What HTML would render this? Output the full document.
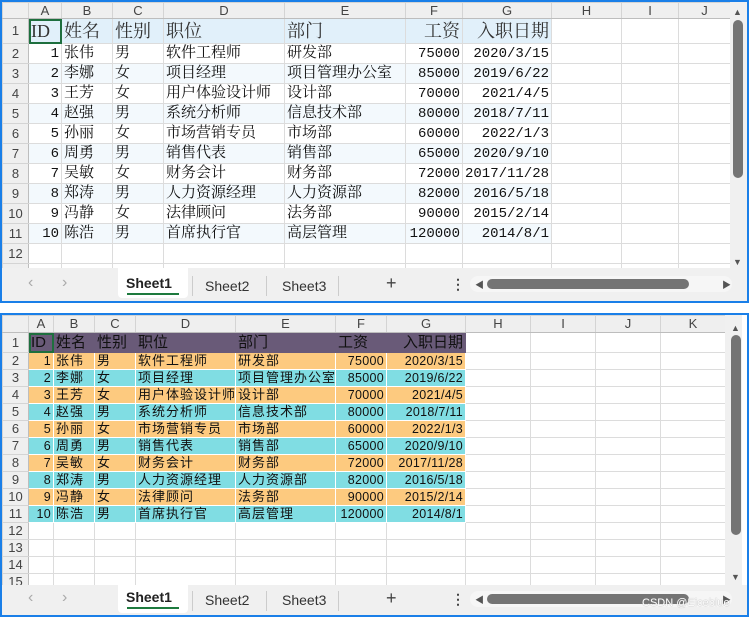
<!DOCTYPE html>
<html><head><meta charset="utf-8"><style>
*{margin:0;padding:0;box-sizing:border-box}
body{width:749px;height:617px;background:#fff;position:relative;overflow:hidden;font-family:"Liberation Sans","Noto Sans CJK SC",sans-serif}
.panel{position:absolute;left:0;width:749px;border:2px solid #1a7fe8;background:#fff;overflow:hidden}
table{border-collapse:collapse;table-layout:fixed;position:absolute;left:0;top:0}
td{border:1px solid #dcdcdc;white-space:nowrap;overflow:hidden;padding:0 2px;vertical-align:middle;line-height:14px}
.ch td{background:#efefef;text-align:center;color:#444;font-size:13px;border-color:#d4d4d4;border-bottom:1px solid #bdbdbd}
td.rh{background:#efefef;text-align:center;color:#444;font-size:13px;padding:0;border-color:#d4d4d4;border-right:1px solid #bdbdbd}
td.corner{background:#efefef}
.t1 td.c{font-family:"Liberation Mono","Noto Serif CJK SC",serif;font-size:15px;color:#111;line-height:16px}
.t1 td.c.n{font-size:14px}
.t1 .r1 td.c{font-size:18px;background:#e1f0fa;color:#333;font-family:"Liberation Serif","Noto Serif CJK SC",serif;line-height:20px}
.t1 .alt td.c{background:#f3f9fd}
.t1 td.e{background:#fff}
.n{text-align:right}
.t2 td.c{font-family:"Liberation Sans","Noto Sans CJK SC",sans-serif;font-size:13px;letter-spacing:1px;color:#111;border:1px solid #fff;line-height:14px}
.t2 .r1 td.c{background:#695a78;font-size:15px;letter-spacing:0;color:#111;border-color:#695a78;line-height:17px}
.t2 .o td.c{background:#fdca7f}
.t2 .b td.c{background:#80dde3}
.t2 td.n{letter-spacing:0.3px;font-size:12.5px}
.sel{outline:2px solid #1e6f3e;outline-offset:-2px}
.tabs{position:absolute;left:0;right:0;background:#f0f0f0}
.tab{position:absolute;font-size:14px;color:#333;top:8px}
.vs{position:absolute;background:#f0f0f0;width:17px}
.thumb{position:absolute;background:#747474;border-radius:5px}
</style></head><body>

<!-- TOP PANEL -->
<div class="panel" style="top:0;height:303px">
<table class="t1" style="width:728px">
<colgroup><col style="width:26px"><col style="width:33px"><col style="width:51px"><col style="width:51px"><col style="width:121px"><col style="width:121px"><col style="width:57px"><col style="width:89px"><col style="width:70px"><col style="width:57px"><col style="width:52px"></colgroup>
<tr class="ch" style="height:16px"><td class="corner"></td><td>A</td><td>B</td><td>C</td><td>D</td><td>E</td><td>F</td><td>G</td><td>H</td><td>I</td><td>J</td></tr>
<tr class="r1" style="height:25px"><td class="rh">1</td><td class="c sel">ID</td><td class="c">姓名</td><td class="c">性别</td><td class="c">职位</td><td class="c">部门</td><td class="c n">工资</td><td class="c n">入职日期</td><td class="e"></td><td class="e"></td><td class="e"></td></tr>
<tr style="height:20px"><td class="rh">2</td><td class="c n">1</td><td class="c">张伟</td><td class="c">男</td><td class="c">软件工程师</td><td class="c">研发部</td><td class="c n">75000</td><td class="c n">2020/3/15</td><td class="e"></td><td class="e"></td><td class="e"></td></tr>
<tr class="alt" style="height:20px"><td class="rh">3</td><td class="c n">2</td><td class="c">李娜</td><td class="c">女</td><td class="c">项目经理</td><td class="c">项目管理办公室</td><td class="c n">85000</td><td class="c n">2019/6/22</td><td class="e"></td><td class="e"></td><td class="e"></td></tr>
<tr style="height:20px"><td class="rh">4</td><td class="c n">3</td><td class="c">王芳</td><td class="c">女</td><td class="c">用户体验设计师</td><td class="c">设计部</td><td class="c n">70000</td><td class="c n">2021/4/5</td><td class="e"></td><td class="e"></td><td class="e"></td></tr>
<tr class="alt" style="height:20px"><td class="rh">5</td><td class="c n">4</td><td class="c">赵强</td><td class="c">男</td><td class="c">系统分析师</td><td class="c">信息技术部</td><td class="c n">80000</td><td class="c n">2018/7/11</td><td class="e"></td><td class="e"></td><td class="e"></td></tr>
<tr style="height:20px"><td class="rh">6</td><td class="c n">5</td><td class="c">孙丽</td><td class="c">女</td><td class="c">市场营销专员</td><td class="c">市场部</td><td class="c n">60000</td><td class="c n">2022/1/3</td><td class="e"></td><td class="e"></td><td class="e"></td></tr>
<tr class="alt" style="height:20px"><td class="rh">7</td><td class="c n">6</td><td class="c">周勇</td><td class="c">男</td><td class="c">销售代表</td><td class="c">销售部</td><td class="c n">65000</td><td class="c n">2020/9/10</td><td class="e"></td><td class="e"></td><td class="e"></td></tr>
<tr style="height:20px"><td class="rh">8</td><td class="c n">7</td><td class="c">吴敏</td><td class="c">女</td><td class="c">财务会计</td><td class="c">财务部</td><td class="c n">72000</td><td class="c n">2017/11/28</td><td class="e"></td><td class="e"></td><td class="e"></td></tr>
<tr class="alt" style="height:20px"><td class="rh">9</td><td class="c n">8</td><td class="c">郑涛</td><td class="c">男</td><td class="c">人力资源经理</td><td class="c">人力资源部</td><td class="c n">82000</td><td class="c n">2016/5/18</td><td class="e"></td><td class="e"></td><td class="e"></td></tr>
<tr style="height:20px"><td class="rh">10</td><td class="c n">9</td><td class="c">冯静</td><td class="c">女</td><td class="c">法律顾问</td><td class="c">法务部</td><td class="c n">90000</td><td class="c n">2015/2/14</td><td class="e"></td><td class="e"></td><td class="e"></td></tr>
<tr class="alt" style="height:20px"><td class="rh">11</td><td class="c n">10</td><td class="c">陈浩</td><td class="c">男</td><td class="c">首席执行官</td><td class="c">高层管理</td><td class="c n">120000</td><td class="c n">2014/8/1</td><td class="e"></td><td class="e"></td><td class="e"></td></tr>
<tr style="height:20px"><td class="rh">12</td><td></td><td></td><td></td><td></td><td></td><td></td><td></td><td></td><td></td><td></td></tr>
<tr style="height:20px"><td class="rh">13</td><td></td><td></td><td></td><td></td><td></td><td></td><td></td><td></td><td></td><td></td></tr>
</table>
<div class="vs" style="left:728px;top:0;height:266px"></div>
<div style="position:absolute;left:731px;top:5px;font-size:9px;color:#555">▲</div>
<div class="thumb" style="left:731px;top:18px;width:10px;height:158px"></div>
<div style="position:absolute;left:731px;top:255px;font-size:9px;color:#555">▼</div>
<div class="tabs" style="top:266px;height:33px">
 <div style="position:absolute;left:26px;top:6px;color:#aaa;font-size:16px">‹</div>
 <div style="position:absolute;left:60px;top:6px;color:#aaa;font-size:16px">›</div>
 <div style="position:absolute;left:116px;top:0;width:70px;height:30px;background:#fff;border-radius:0 0 4px 4px"></div>
 <div class="tab" style="left:124px;top:7px;font-weight:bold;color:#222">Sheet1</div>
 <div style="position:absolute;left:125px;top:25px;width:52px;height:2px;background:#1d7a3e"></div>
 <div style="position:absolute;left:190px;top:8px;width:1px;height:20px;background:#ccc"></div>
 <div class="tab" style="left:203px;top:10px">Sheet2</div>
 <div style="position:absolute;left:264px;top:8px;width:1px;height:20px;background:#ccc"></div>
 <div class="tab" style="left:280px;top:10px">Sheet3</div>
 <div style="position:absolute;left:336px;top:8px;width:1px;height:20px;background:#ccc"></div>
 <div style="position:absolute;left:384px;top:5px;font-size:18px;color:#444">+</div>
 <div style="position:absolute;left:449px;top:8px;font-size:14px;color:#444;font-weight:bold">⋮</div>
 <div style="position:absolute;left:468px;top:8px;width:262px;height:16px;background:#f6f6f6;border-radius:8px"></div>
 <div style="position:absolute;left:473px;top:10px;font-size:9px;color:#555">◀</div>
 <div class="thumb" style="left:485px;top:11px;width:202px;height:10px"></div>
 <div style="position:absolute;left:720px;top:10px;font-size:9px;color:#555">▶</div>
</div>
</div>

<!-- BOTTOM PANEL -->
<div class="panel" style="top:313px;height:304px">
<table class="t2" style="width:723px">
<colgroup><col style="width:26px"><col style="width:25px"><col style="width:41px"><col style="width:41px"><col style="width:100px"><col style="width:100px"><col style="width:51px"><col style="width:79px"><col style="width:65px"><col style="width:65px"><col style="width:65px"><col style="width:65px"></colgroup>
<tr class="ch" style="height:17px"><td class="corner"></td><td>A</td><td>B</td><td>C</td><td>D</td><td>E</td><td>F</td><td>G</td><td>H</td><td>I</td><td>J</td><td>K</td></tr>
<tr class="r1" style="height:20px"><td class="rh">1</td><td class="c sel" style="outline-color:#1e6f3e">ID</td><td class="c">姓名</td><td class="c">性别</td><td class="c">职位</td><td class="c">部门</td><td class="c">工资</td><td class="c" style="text-align:right">入职日期</td><td></td><td></td><td></td><td></td></tr>
<tr class="o" style="height:17px"><td class="rh">2</td><td class="c n">1</td><td class="c">张伟</td><td class="c">男</td><td class="c">软件工程师</td><td class="c">研发部</td><td class="c n">75000</td><td class="c n">2020/3/15</td><td></td><td></td><td></td><td></td></tr>
<tr class="b" style="height:17px"><td class="rh">3</td><td class="c n">2</td><td class="c">李娜</td><td class="c">女</td><td class="c">项目经理</td><td class="c">项目管理办公室</td><td class="c n">85000</td><td class="c n">2019/6/22</td><td></td><td></td><td></td><td></td></tr>
<tr class="o" style="height:17px"><td class="rh">4</td><td class="c n">3</td><td class="c">王芳</td><td class="c">女</td><td class="c">用户体验设计师</td><td class="c">设计部</td><td class="c n">70000</td><td class="c n">2021/4/5</td><td></td><td></td><td></td><td></td></tr>
<tr class="b" style="height:17px"><td class="rh">5</td><td class="c n">4</td><td class="c">赵强</td><td class="c">男</td><td class="c">系统分析师</td><td class="c">信息技术部</td><td class="c n">80000</td><td class="c n">2018/7/11</td><td></td><td></td><td></td><td></td></tr>
<tr class="o" style="height:17px"><td class="rh">6</td><td class="c n">5</td><td class="c">孙丽</td><td class="c">女</td><td class="c">市场营销专员</td><td class="c">市场部</td><td class="c n">60000</td><td class="c n">2022/1/3</td><td></td><td></td><td></td><td></td></tr>
<tr class="b" style="height:17px"><td class="rh">7</td><td class="c n">6</td><td class="c">周勇</td><td class="c">男</td><td class="c">销售代表</td><td class="c">销售部</td><td class="c n">65000</td><td class="c n">2020/9/10</td><td></td><td></td><td></td><td></td></tr>
<tr class="o" style="height:17px"><td class="rh">8</td><td class="c n">7</td><td class="c">吴敏</td><td class="c">女</td><td class="c">财务会计</td><td class="c">财务部</td><td class="c n">72000</td><td class="c n">2017/11/28</td><td></td><td></td><td></td><td></td></tr>
<tr class="b" style="height:17px"><td class="rh">9</td><td class="c n">8</td><td class="c">郑涛</td><td class="c">男</td><td class="c">人力资源经理</td><td class="c">人力资源部</td><td class="c n">82000</td><td class="c n">2016/5/18</td><td></td><td></td><td></td><td></td></tr>
<tr class="o" style="height:17px"><td class="rh">10</td><td class="c n">9</td><td class="c">冯静</td><td class="c">女</td><td class="c">法律顾问</td><td class="c">法务部</td><td class="c n">90000</td><td class="c n">2015/2/14</td><td></td><td></td><td></td><td></td></tr>
<tr class="b" style="height:17px"><td class="rh">11</td><td class="c n">10</td><td class="c">陈浩</td><td class="c">男</td><td class="c">首席执行官</td><td class="c">高层管理</td><td class="c n">120000</td><td class="c n">2014/8/1</td><td></td><td></td><td></td><td></td></tr>
<tr style="height:17px"><td class="rh">12</td><td></td><td></td><td></td><td></td><td></td><td></td><td></td><td></td><td></td><td></td><td></td></tr>
<tr style="height:17px"><td class="rh">13</td><td></td><td></td><td></td><td></td><td></td><td></td><td></td><td></td><td></td><td></td><td></td></tr>
<tr style="height:17px"><td class="rh">14</td><td></td><td></td><td></td><td></td><td></td><td></td><td></td><td></td><td></td><td></td><td></td></tr>
<tr style="height:17px"><td class="rh">15</td><td></td><td></td><td></td><td></td><td></td><td></td><td></td><td></td><td></td><td></td><td></td></tr>
</table>
<div class="vs" style="left:723px;top:0;height:270px"></div>
<div style="position:absolute;left:729px;top:8px;font-size:9px;color:#555">▲</div>
<div class="thumb" style="left:729px;top:20px;width:10px;height:200px"></div>
<div style="position:absolute;left:729px;top:257px;font-size:9px;color:#555">▼</div>
<div class="tabs" style="top:270px;height:30px">
 <div style="position:absolute;left:26px;top:4px;color:#aaa;font-size:16px">‹</div>
 <div style="position:absolute;left:60px;top:4px;color:#aaa;font-size:16px">›</div>
 <div style="position:absolute;left:116px;top:0;width:70px;height:28px;background:#fff;border-radius:0 0 4px 4px"></div>
 <div class="tab" style="left:124px;top:4px;font-weight:bold;color:#222">Sheet1</div>
 <div style="position:absolute;left:125px;top:22px;width:52px;height:2px;background:#1d7a3e"></div>
 <div style="position:absolute;left:190px;top:6px;width:1px;height:20px;background:#ccc"></div>
 <div class="tab" style="left:203px;top:7px">Sheet2</div>
 <div style="position:absolute;left:264px;top:6px;width:1px;height:20px;background:#ccc"></div>
 <div class="tab" style="left:280px;top:7px">Sheet3</div>
 <div style="position:absolute;left:336px;top:6px;width:1px;height:20px;background:#ccc"></div>
 <div style="position:absolute;left:384px;top:3px;font-size:18px;color:#444">+</div>
 <div style="position:absolute;left:449px;top:6px;font-size:14px;color:#444;font-weight:bold">⋮</div>
 <div style="position:absolute;left:468px;top:6px;width:262px;height:16px;background:#f6f6f6;border-radius:8px"></div>
 <div style="position:absolute;left:473px;top:8px;font-size:9px;color:#555">◀</div>
 <div class="thumb" style="left:485px;top:9px;width:202px;height:10px"></div>
 <div style="position:absolute;left:720px;top:8px;font-size:9px;color:#555">▶</div>
 <div style="position:absolute;left:640px;top:12px;font-size:11px;color:#fff;text-shadow:0 0 1px #888">CSDN @Eiceblue</div>
</div>
</div>
</body></html>
